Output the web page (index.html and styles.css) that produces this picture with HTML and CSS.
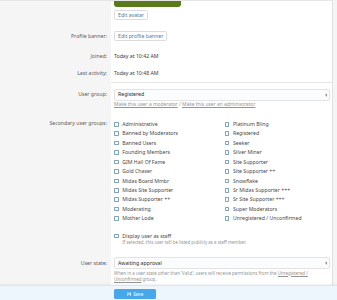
FILE: index.html
```html
<!DOCTYPE html>
<html>
  <head>
    <link rel="stylesheet" href="styles.css">
  </head>
  <body>
    <div class="block">
      <div class="form-row">
        <div class="row-label"></div>
        <div class="row-control">
          <div class="avatar"></div>
          <span class="button">Edit avatar</span>
        </div>
      </div>

      <div class="form-row form-row--button">
        <div class="row-label">Profile banner:</div>
        <div class="row-control">
          <span class="button">Edit profile banner</span>
        </div>
      </div>

      <div class="form-row form-row--text">
        <div class="row-label">Joined:</div>
        <div class="row-control">Today at 10:42 AM</div>
      </div>

      <div class="form-row form-row--text">
        <div class="row-label">Last activity:</div>
        <div class="row-control">Today at 10:48 AM</div>
      </div>

      <div class="form-row form-row--input form-row--separated">
        <div class="row-label">User group:</div>
        <div class="row-control">
          <div class="select">
            <span>Registered</span>
            <svg class="select-arrow" viewBox="0 0 4 6"><path d="M0.5 2.4 2 0.8 3.5 2.4ZM0.5 3.6 2 5.2 3.5 3.6Z" /></svg>
          </div>
          <div class="explain">
            <a href="#">Make this user a moderator</a> / <a href="#">Make this user an administrator</a>
          </div>
        </div>
      </div>

      <div class="form-row form-row--check">
        <div class="row-label">Secondary user groups:</div>
        <div class="row-control">
          <ul class="check-list">
            <li><span class="checkbox"></span>Administrative</li>
            <li><span class="checkbox"></span>Platinum Bling</li>
            <li><span class="checkbox"></span>Banned by Moderators</li>
            <li><span class="checkbox"></span>Registered</li>
            <li><span class="checkbox"></span>Banned Users</li>
            <li><span class="checkbox"></span>Seeker</li>
            <li><span class="checkbox"></span>Founding Members</li>
            <li><span class="checkbox"></span>Silver Miner</li>
            <li><span class="checkbox"></span>GIM Hall Of Fame</li>
            <li><span class="checkbox"></span>Site Supporter</li>
            <li><span class="checkbox"></span>Gold Chaser</li>
            <li><span class="checkbox"></span>Site Supporter ++</li>
            <li><span class="checkbox"></span>Midas Board Mmbr</li>
            <li><span class="checkbox"></span>Snowflake</li>
            <li><span class="checkbox"></span>Midas Site Supporter</li>
            <li><span class="checkbox"></span>Sr Midas Supporter +++</li>
            <li><span class="checkbox"></span>Midas Supporter ++</li>
            <li><span class="checkbox"></span>Sr Site Supporter +++</li>
            <li><span class="checkbox"></span>Moderating</li>
            <li><span class="checkbox"></span>Super Moderators</li>
            <li><span class="checkbox"></span>Mother Lode</li>
            <li><span class="checkbox"></span>Unregistered / Unconfirmed</li>
          </ul>
        </div>
      </div>

      <div class="form-row form-row--check form-row--staff">
        <div class="row-label"></div>
        <div class="row-control">
          <div class="check-item"><span class="checkbox"></span>Display user as staff</div>
          <div class="hint">If selected, this user will be listed publicly as a staff member.</div>
        </div>
      </div>

      <div class="form-row form-row--input form-row--state">
        <div class="row-label">User state:</div>
        <div class="row-control">
          <div class="select">
            <span>Awaiting approval</span>
            <svg class="select-arrow" viewBox="0 0 4 6"><path d="M0.5 2.4 2 0.8 3.5 2.4ZM0.5 3.6 2 5.2 3.5 3.6Z" /></svg>
          </div>
          <div class="explain explain--state">
            When in a user state other than 'Valid', users will receive permissions from the <a href="#">Unregistered / Unconfirmed</a> group.
          </div>
        </div>
      </div>
    </div>

    <div class="form-submit">
      <span class="button-primary">
        <svg class="save-icon" viewBox="0 0 10 10">
          <path d="M1 1h6.5L9 2.5V9H1Z" fill="#fff" />
          <rect x="2.5" y="1" width="4" height="2.6" fill="#47a7eb" />
          <rect x="2.5" y="5.5" width="5" height="3.5" fill="#47a7eb" />
        </svg>
        Save
      </span>
    </div>
  </body>
</html>
```

FILE: styles.css
```css
body {
  margin: 0;
  background-color: #f5f5f5;
  font-family: "Noto Sans", Arial, sans-serif;
  font-size: 5.2px;
  line-height: 6.6px;
  color: #3a3a3a;
  overflow: hidden;
  height: 300px;
}

.block {
  width: 333px;
  background-color: #fff;
  border-right: 1px solid #e0e0e0;
  border-top: 1px solid #e6e6e6;
  box-sizing: border-box;
}

.form-row {
  display: grid;
  grid-template-columns: 111px 1fr;
}

.row-label {
  background-color: #f5f5f5;
  color: #5c5c5c;
  text-align: right;
  padding: 6px 4px 6px 0;
}

.row-control {
  padding: 0 2px 6px 3px;
}

.form-row--button .row-label {
  padding-top: 5px;
  line-height: 10px;
}

.form-row--button .row-control {
  padding-top: 5px;
}

.form-row--text .row-label,
.form-row--text .row-control {
  padding-top: 5.5px;
  padding-bottom: 5.5px;
}

.form-row--separated .row-control {
  border-top: 1px solid #e5e5e5;
}

.form-row--input .row-label {
  padding-top: 5.5px;
  line-height: 12px;
}

.form-row--input .row-control {
  padding-top: 5.5px;
}

.form-row--state {
  padding-bottom: 20px;
}

.form-row--check .row-label {
  padding-top: 5.5px;
  line-height: 9.5px;
}

.form-row--check .row-control {
  padding-top: 5.5px;
}

.form-row--staff .row-control {
  padding-top: 2px;
}

.avatar {
  width: 67px;
  height: 6px;
  background-color: #5a7b1b;
  border-radius: 0 0 3px 3px;
  margin-bottom: 3px;
}

.button {
  display: inline-block;
  height: 10px;
  line-height: 9px;
  padding: 0 3px;
  border: 1px solid #dcdcdc;
  border-radius: 1.5px;
  background-color: #fff;
  color: #4f7d99;
  box-sizing: border-box;
}

.select {
  display: flex;
  align-items: center;
  justify-content: space-between;
  height: 12px;
  padding: 0 1.5px 0 3px;
  border: 1px solid #e3e3e3;
  border-radius: 2px;
  background-color: #fbfcfd;
  box-sizing: border-box;
  color: #2e2e2e;
}

.select-arrow {
  width: 2.5px;
  height: 4px;
  fill: #333;
}

.explain,
.hint {
  color: #949494;
  font-size: 4.9px;
  line-height: 6.8px;
}

.explain {
  margin-top: 0.5px;
}

.explain--state {
  font-size: 4.45px;
  padding-right: 10px;
}

.explain a {
  color: #949494;
}

.check-list {
  list-style: none;
  margin: 0;
  padding: 0;
  display: grid;
  grid-template-columns: 110.7px 1fr;
}

.check-list li,
.check-item {
  display: flex;
  align-items: center;
  height: 9.45px;
  color: #474747;
}

.checkbox {
  width: 4.6px;
  height: 4.6px;
  border: 0.8px solid #7fa3bb;
  border-radius: 0.8px;
  box-sizing: border-box;
  margin-right: 3.7px;
  background-color: #fff;
  flex-shrink: 0;
}

.hint {
  font-size: 4.4px;
  padding-left: 8.3px;
  margin-top: -2px;
}

.form-submit {
  position: fixed;
  left: 0;
  right: 0;
  bottom: 0;
  height: 15.5px;
  padding: 3.5px 0 0 114px;
  box-sizing: border-box;
  background-color: rgba(236, 245, 252, 0.95);
  border-top: 1px solid #dde6ee;
  box-shadow: 0 -1px 2px rgba(0, 0, 0, 0.06);
}

.button-primary {
  display: inline-flex;
  align-items: center;
  justify-content: center;
  gap: 2px;
  width: 42px;
  height: 10px;
  border-radius: 1.5px;
  background-color: #47a7eb;
  color: #fff;
  font-size: 4.6px;
}

.save-icon {
  width: 4.5px;
  height: 4.5px;
}
```
